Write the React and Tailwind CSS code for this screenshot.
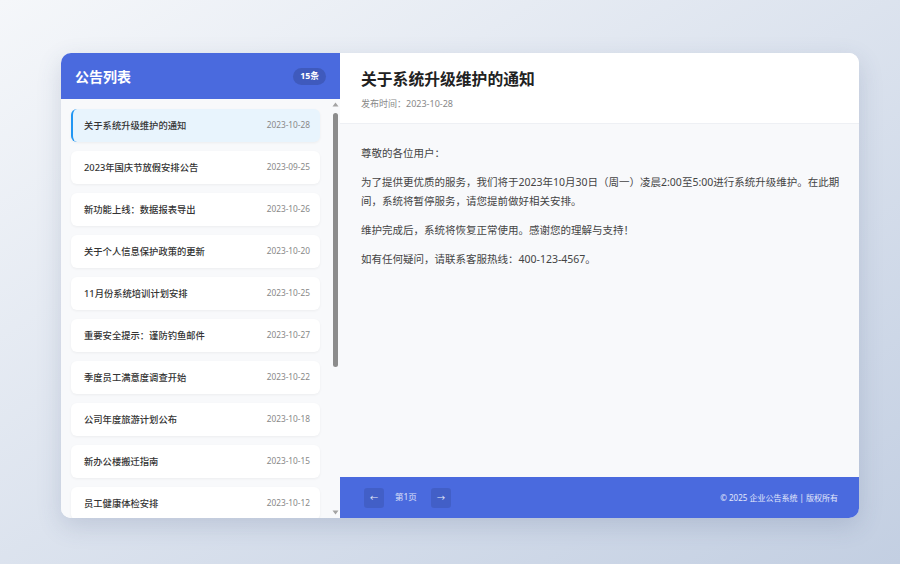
import React from 'react'

const notices = [
  { title: '关于系统升级维护的通知', date: '2023-10-28' },
  { title: '2023年国庆节放假安排公告', date: '2023-09-25' },
  { title: '新功能上线：数据报表导出', date: '2023-10-26' },
  { title: '关于个人信息保护政策的更新', date: '2023-10-20' },
  { title: '11月份系统培训计划安排', date: '2023-10-25' },
  { title: '重要安全提示：谨防钓鱼邮件', date: '2023-10-27' },
  { title: '季度员工满意度调查开始', date: '2023-10-22' },
  { title: '公司年度旅游计划公布', date: '2023-10-18' },
  { title: '新办公楼搬迁指南', date: '2023-10-15' },
  { title: '员工健康体检安排', date: '2023-10-12' },
  { title: '年终总结会议通知', date: '2023-10-10' },
  { title: '办公用品申领流程调整', date: '2023-10-08' },
  { title: '内部系统账号安全升级', date: '2023-10-05' },
  { title: '关于加强考勤管理的通知', date: '2023-10-03' },
  { title: '秋季消防演练安排', date: '2023-10-01' },
]

const NoticeItem = ({ item, active }) => (
  <div
    className={
      active
        ? 'flex h-[33px] shrink-0 items-center justify-between rounded-md border-l-2 border-[#2196f3] bg-[#e8f4fd] pl-[11px] pr-[10px] shadow-[0_1px_3px_rgba(0,0,0,0.05)]'
        : 'flex h-[33px] shrink-0 items-center justify-between rounded-md bg-white pl-[13px] pr-[10px] shadow-[0_1px_3px_rgba(0,0,0,0.05)]'
    }
  >
    <span className="text-[9.3px] font-medium text-[#333]">{item.title}</span>
    <span className="text-[8.3px] text-[#888]">{item.date}</span>
  </div>
)

const FakeScrollbar = () => (
  <div className="flex w-[10px] shrink-0 flex-col items-center bg-[#f8f9fb] py-[2px]">
    <svg width="7" height="5" viewBox="0 0 7 5" className="mt-[1px]">
      <path d="M3.5 0.5 L6.5 4.5 L0.5 4.5 Z" fill="#a3a3a3" />
    </svg>
    <div className="mt-[6px] h-[254px] w-[5px] rounded-full bg-[#8c8c8c]" />
    <div className="flex-1" />
    <svg width="7" height="5" viewBox="0 0 7 5" className="mb-[1px]">
      <path d="M0.5 0.5 L6.5 0.5 L3.5 4.5 Z" fill="#a3a3a3" />
    </svg>
  </div>
)

const App = () => {
  return (
    <div className="h-[564px] w-[900px] overflow-hidden bg-gradient-to-br from-[#f5f7fa] to-[#c3cfe2] pt-[53px] font-['Noto_Sans','Noto_Sans_CJK_SC',sans-serif]">
      <div className="ml-[61px] flex h-[465px] w-[798px] overflow-hidden rounded-[10px] bg-white shadow-[0_8px_24px_rgba(60,80,120,0.18)]">
        {/* sidebar */}
        <div className="flex w-[279px] shrink-0 flex-col">
          <div className="flex h-[46px] shrink-0 items-center justify-between bg-[#4a6ade] pl-[14px] pr-[14px]">
            <h2 className="text-[14px] font-bold text-white">公告列表</h2>
            <span className="rounded-full bg-black/15 px-[7px] py-[3px] text-[8.8px] font-bold leading-[11px] text-white">
              15条
            </span>
          </div>
          <div className="flex min-h-0 flex-1 bg-[#f8f9fb]">
            <div className="flex min-w-0 flex-1 flex-col gap-[9px] overflow-hidden pl-[10px] pr-[10px] pt-[10px]">
              {notices.map((n, i) => (
                <NoticeItem key={n.title} item={n} active={i === 0} />
              ))}
            </div>
            <FakeScrollbar />
          </div>
        </div>

        {/* detail */}
        <div className="flex min-w-0 flex-1 flex-col">
          <div className="shrink-0 border-b border-[#eef0f4] bg-white px-[21px] pb-[12px] pt-[14px]">
            <h1 className="text-[15.8px] font-bold leading-[24px] text-[#222]">关于系统升级维护的通知</h1>
            <p className="mt-[6px] text-[9px] leading-[14px] text-[#888]">发布时间：2023-10-28</p>
          </div>
          <div className="flex-1 bg-[#f8f9fb] pl-[21px] pr-[17px] pt-[20px] text-[10.5px] leading-[19px] text-[#444]">
            <p className="mb-[10px]">尊敬的各位用户：</p>
            <p className="mb-[10px]">
              为了提供更优质的服务，我们将于2023年10月30日（周一）凌晨2:00至5:00进行系统升级维护。在此期间，系统将暂停服务，请您提前做好相关安排。
            </p>
            <p className="mb-[10px]">维护完成后，系统将恢复正常使用。感谢您的理解与支持！</p>
            <p className="mb-[10px]">如有任何疑问，请联系客服热线：400-123-4567。</p>
          </div>
          <div className="flex h-[41px] shrink-0 items-center justify-between bg-[#4a6ade] pl-[24px] pr-[21px]">
            <div className="flex items-center">
              <button className="flex h-[20px] w-[20px] items-center justify-center rounded-[3px] bg-black/10 text-[8px] text-white/90">
                ←
              </button>
              <span className="ml-[11px] mr-[14px] text-[8.5px] text-white/80">第1页</span>
              <button className="flex h-[20px] w-[20px] items-center justify-center rounded-[3px] bg-black/10 text-[8px] text-white/90">
                →
              </button>
            </div>
            <p className="text-[8px] text-white/85">© 2025 企业公告系统 | 版权所有</p>
          </div>
        </div>
      </div>
    </div>
  )
}

export default App
